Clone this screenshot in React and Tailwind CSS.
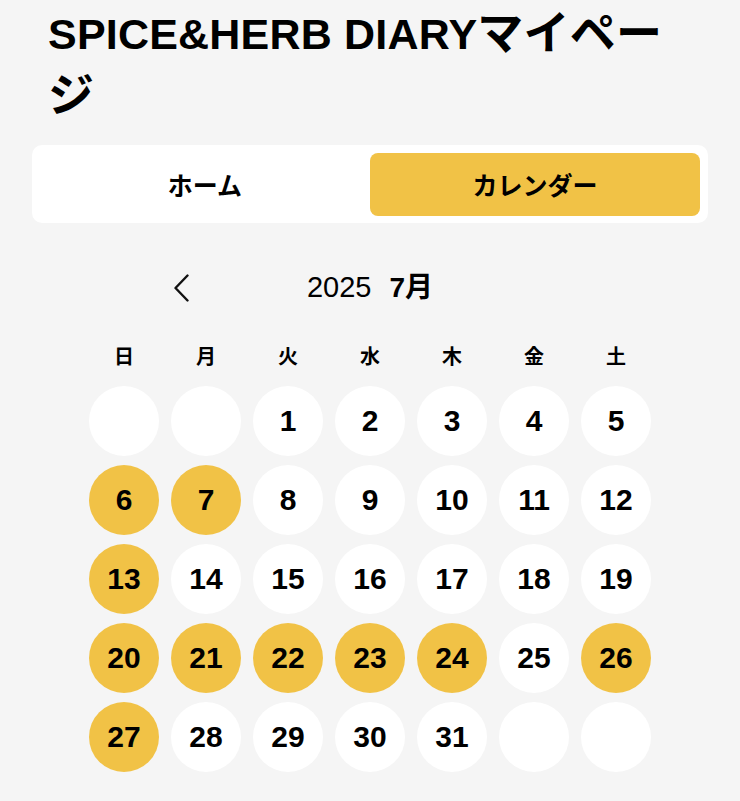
const latin = "font-['Liberation_Sans','Noto_Sans_CJK_JP',sans-serif]";

const days = [
  null, null, 1, 2, 3, 4, 5,
  6, 7, 8, 9, 10, 11, 12,
  13, 14, 15, 16, 17, 18, 19,
  20, 21, 22, 23, 24, 25, 26,
  27, 28, 29, 30, 31, null, null,
];

const marked = [6, 7, 13, 20, 21, 22, 23, 24, 26, 27];

const weekdays = ["日", "月", "火", "水", "木", "金", "土"];

function DayCell({ day }) {
  const on = marked.includes(day);
  return (
    <div
      className={
        on
          ? "w-[70px] h-[70px] rounded-full bg-[#f1c246] flex items-center justify-center"
          : "w-[70px] h-[70px] rounded-full bg-white flex items-center justify-center"
      }
    >
      {day && <span className="text-[30px] font-bold text-black leading-none">{day}</span>}
    </div>
  );
}

export default function App() {
  return (
    <div className={`min-h-[801px] bg-[#f5f5f5] ${latin} text-black`}>
      <div className="px-8 pt-[3px]">
        <h1 className="px-4 text-[43px] leading-[62px] font-bold tracking-[0.2px]">
          SPICE&amp;HERB DIARY
          <span className="text-[46px] leading-[50px] font-['Noto_Sans_CJK_JP',sans-serif]">マイページ</span>
        </h1>

        <div className="mt-[18px] bg-white rounded-[10px] p-2 pb-[7px] grid grid-cols-2">
          <button className="h-[63px] rounded-lg flex items-center justify-center text-[25px] font-bold font-['Noto_Sans_CJK_JP',sans-serif]">
            ホーム
          </button>
          <button className="h-[63px] rounded-lg bg-[#f1c246] flex items-center justify-center text-[25px] font-bold font-['Noto_Sans_CJK_JP',sans-serif]">
            カレンダー
          </button>
        </div>
      </div>

      <div className="w-[562px] mx-auto">
        <div className="mt-[43px] h-[28px] grid grid-cols-[1fr_auto_1fr] items-center">
          <button className="justify-self-start ml-[84px] flex items-center">
            <svg width="16" height="28" viewBox="0 0 16 28" fill="none">
              <polyline
                points="14.5,1.5 2.5,14 14.5,26.5"
                stroke="#111"
                strokeWidth="2.4"
                strokeLinecap="round"
                strokeLinejoin="round"
              />
            </svg>
          </button>
          <div className="flex items-baseline gap-[18px]">
            <span className="text-[29px] font-normal">2025</span>
            <span className="text-[28px] font-bold">7月</span>
          </div>
          <div />
        </div>

        <div className="mt-[50px] grid grid-cols-7 gap-x-3">
          {weekdays.map((w) => (
            <div
              key={w}
              className="text-center text-[20px] leading-[24px] font-bold font-['Noto_Sans_CJK_JP',sans-serif]"
            >
              {w}
            </div>
          ))}
        </div>

        <div className="mt-[18px] grid grid-cols-7 gap-x-3 gap-y-[9px]">
          {days.map((d, i) => (
            <DayCell key={i} day={d} />
          ))}
        </div>
      </div>
    </div>
  );
}
